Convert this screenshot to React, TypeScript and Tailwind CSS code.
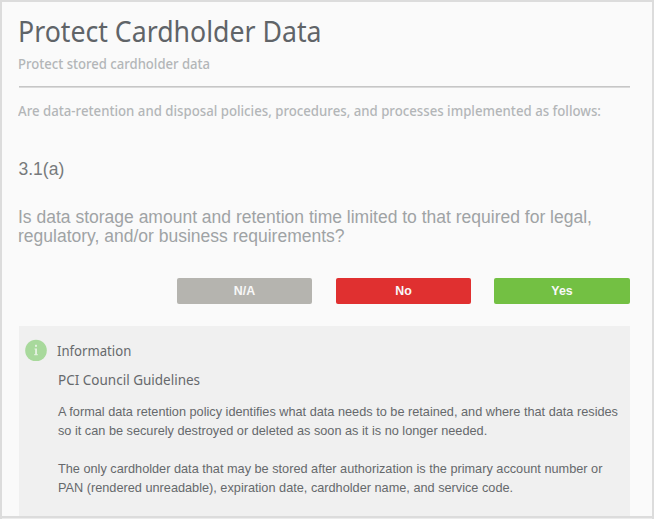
import type { ReactNode } from "react";

function Answer({ className, children }: { className: string; children: ReactNode }) {
  return (
    <button
      className={`flex h-[26px] items-center justify-center rounded-[2px] pt-px text-[12.4px] font-bold text-[#f8f8f8] ${className}`}
    >
      {children}
    </button>
  );
}

export default function App() {
  return (
    <main className="flex h-[519px] w-[654px] flex-col overflow-hidden border-2 border-b-0 border-[#dcdcdc] bg-[#fafafa] font-['Liberation_Sans',Arial,sans-serif] whitespace-nowrap">
      <div className="h-[514px] pr-[22px] pl-[17px]">
        <header className="h-[85px] pt-[9px] font-['Noto_Sans',sans-serif]">
          <h1 className="-ml-px h-[40px] origin-left scale-x-[0.92] text-[29px] leading-[40px] text-[#606468]">
            Protect Cardholder Data
          </h1>
          <p className="-ml-px mt-[2px] h-[20px] origin-left scale-x-[0.903] text-[14.5px] leading-[20px] font-medium text-[#b3b6b8]">
            Protect stored cardholder data
          </p>
          <div className="mt-[13px] h-[2px] border-t border-b border-t-[#c6c6c6] border-b-[#dadada]" />
        </header>

        <p className="-ml-px mt-[13px] h-[20px] origin-left scale-x-[0.911] font-['Noto_Sans',sans-serif] text-[14.5px] leading-[20px] font-medium text-[#b3b6b8]">
          Are data-retention and disposal policies, procedures, and processes implemented as follows:
        </p>

        <h2 className="-ml-px mt-[39px] h-[20px] pl-[0.5px] text-[17.5px] leading-[20px] text-[#777a7c]">3.1(a)</h2>
        <p className="-ml-px mt-[29px] h-[38px] text-[17.5px] leading-[19px] text-[#9fa3a5]">
          Is data storage amount and retention time limited to that required for legal,
          <br />
          regulatory, and/or business requirements?
        </p>

        <div className="mt-[32px] flex justify-end gap-[23px]">
          <Answer className="mr-px w-[135px] bg-[#b5b4af]">N/A</Answer>
          <Answer className="w-[135px] bg-[#e03030]">No</Answer>
          <Answer className="w-[136px] bg-[#73c043]">Yes</Answer>
        </div>

        <section className="mt-[22px] h-[190px] bg-[#f0f0f0] pt-[13px] pl-[6px] text-[#66696c]">
          <div className="flex items-center gap-[10px]">
            <svg className="size-[22px]" viewBox="0 0 22 22">
              <circle cx="11" cy="11.5" r="10.8" fill="#a8d99c" />
              <rect x="10" y="5.8" width="2" height="2" fill="#e3f1df" />
              <path d="M9.5 9.4H12V15h.7v1.2H9.3V15h.8v-4.5h-.6z" fill="#e3f1df" />
            </svg>
            <h3 className="origin-left scale-x-[0.875] font-['Noto_Sans',sans-serif] text-[15px] leading-[22px]">
              Information
            </h3>
          </div>
          <div className="pl-[33px]">
            <h4 className="mt-[8px] h-[20px] origin-left scale-x-[0.9] font-['Noto_Sans',sans-serif] text-[15px] leading-[20px]">
              PCI Council Guidelines
            </h4>
            <div className="mt-[13px] text-[12.73px] leading-[19.1px]">
              <p>
                A formal data retention policy identifies what data needs to be retained, and where that data resides
                <br />
                so it can be securely destroyed or deleted as soon as it is no longer needed.
              </p>
              <p className="mt-[19.1px]">
                The only cardholder data that may be stored after authorization is the primary account number or
                <br />
                PAN (rendered unreadable), expiration date, cardholder name, and service code.
              </p>
            </div>
          </div>
        </section>
      </div>
      <div className="h-[2px] shrink-0 bg-[#dcdcdc]" />
      <div className="h-px shrink-0 bg-[#ececec]" />
    </main>
  );
}
